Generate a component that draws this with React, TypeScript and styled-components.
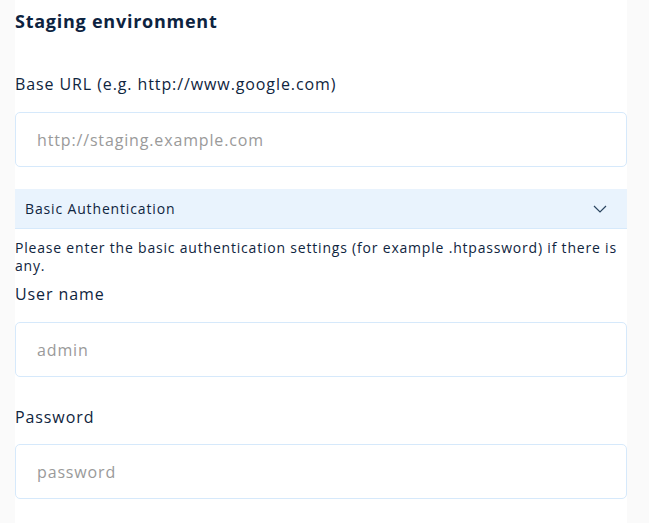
import React from "react";
import styled, { createGlobalStyle } from "styled-components";

const Global = createGlobalStyle`
  html, body { margin: 0; padding: 0; background: #fafafa; }
  body { font-family: "Open Sans", "Lato", sans-serif; color: #0f2540; }
  * { box-sizing: border-box; }
`;

const Page = styled.div`
  padding-left: 15px;
  min-height: 523px;
`;

const Panel = styled.div`
  width: 612px;
  background: #ffffff;
  min-height: 523px;
  padding-top: 9px;
  display: flex;
  flex-direction: column;
`;

const Title = styled.h2`
  margin: 0;
  font-size: 18px;
  line-height: 24px;
  font-weight: 700;
  letter-spacing: 0.75px;
  color: #0d2340;
`;

const Label = styled.label<{ $gap: number }>`
  display: block;
  margin-top: ${(p) => p.$gap}px;
  font-size: 16px;
  line-height: 24px;
  letter-spacing: 0.9px;
  color: #0f2540;
`;

const Input = styled.input<{ $gap: number }>`
  margin-top: ${(p) => p.$gap}px;
  width: 100%;
  height: 55px;
  border: 1px solid #d6e9fb;
  border-radius: 5px;
  padding: 0 21px;
  font-family: inherit;
  font-size: 16px;
  letter-spacing: 0.85px;
  color: #0f2540;
  background: #fff;
  outline: none;
  &::placeholder { color: #9a9a9a; }
`;

const AccordionHeader = styled.button`
  margin-top: 22px;
  height: 40px;
  width: 100%;
  display: flex;
  align-items: center;
  justify-content: space-between;
  padding: 0 20px 0 10px;
  background: #e9f3fd;
  border: none;
  border-bottom: 1px solid #d6e9fb;
  font-family: inherit;
  font-size: 14px;
  letter-spacing: 0.85px;
  color: #0f2540;
  cursor: pointer;
`;

const Desc = styled.p`
  margin: 10px 0 0;
  font-size: 14px;
  line-height: 18px;
  letter-spacing: 0.8px;
  color: #0f2540;
`;

const Chevron = () => (
  <svg width="14" height="8" viewBox="0 0 14 8" fill="none">
    <path d="M1 1l6 6 6-6" stroke="#2a4560" strokeWidth="1.2" />
  </svg>
);

export default function App() {
  return (
    <>
      <Global />
      <Page>
        <Panel>
          <Title>Staging environment</Title>
          <Label $gap={39}>Base URL (e.g. http://www.google.com)</Label>
          <Input $gap={16} placeholder="http://staging.example.com" />
          <AccordionHeader>
            <span>Basic Authentication</span>
            <Chevron />
          </AccordionHeader>
          <Desc>
            Please enter the basic authentication settings (for example .htpassword) if there is any.
          </Desc>
          <Label $gap={7}>User name</Label>
          <Input $gap={16} placeholder="admin" />
          <Label $gap={28}>Password</Label>
          <Input $gap={15} placeholder="password" />
        </Panel>
      </Page>
    </>
  );
}
